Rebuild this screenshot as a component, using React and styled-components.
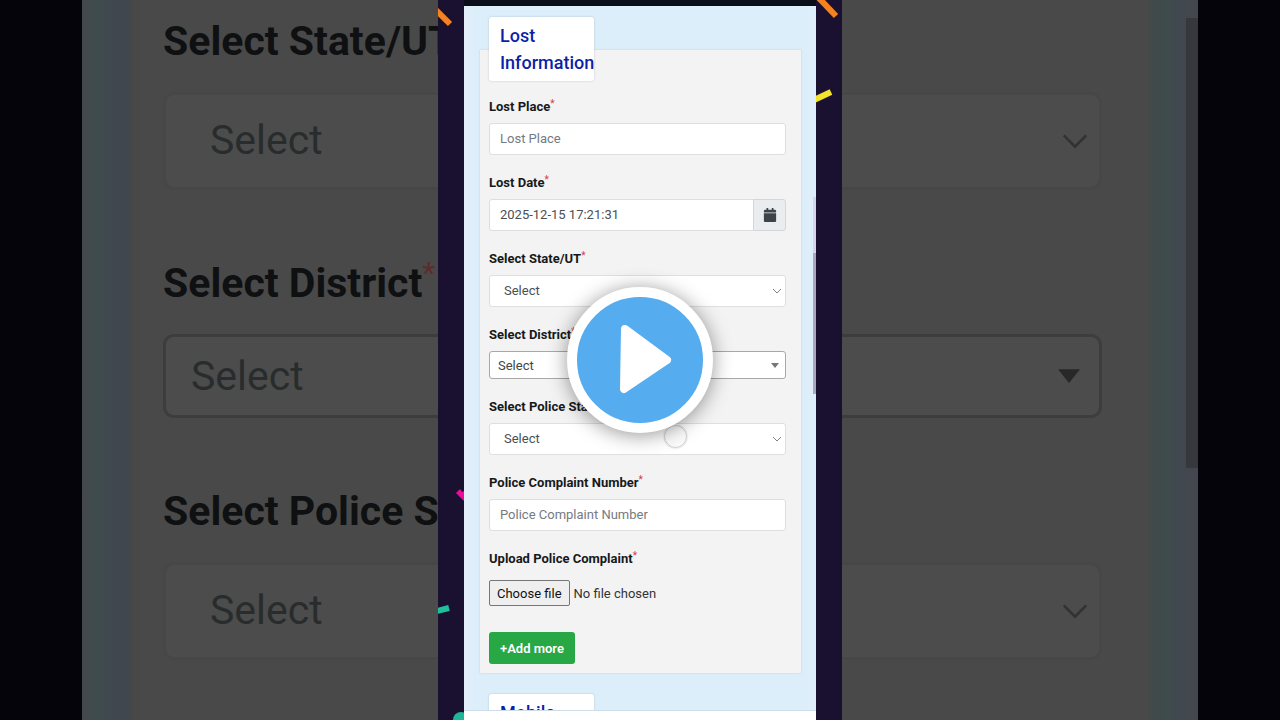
import React, { useRef } from "react";
import styled, { createGlobalStyle } from "styled-components";
import { FaCalendar } from "react-icons/fa";

const GlobalStyle = createGlobalStyle`
  *, *::before, *::after { box-sizing: border-box; }
  body { margin: 0; background: #06040b; font-family: Roboto, "Liberation Sans", sans-serif; }
  button, input, select { font-family: inherit; margin: 0; }
`;

const Page = styled.main`
  display: grid;
  grid-template: 100vh / minmax(0, 1fr);
  overflow: hidden;
  > * { grid-area: 1 / 1; }
`;

/* Enlarged, darkened copy of the form behind the video */
const Backdrop = styled.div`
  position: relative;
  margin: 0 82px;
  padding: 16px 96px 0 81px;
  display: flex;
  flex-direction: column;
  gap: 68px;
  overflow: hidden;
  background: linear-gradient(90deg,
    #45474c 0, #3f4b4d 10px, #3f4b4d 20px, #40484f 30px, #40474f 44px, #484848 52px,
    #494949 60px, #494949 calc(100% - 52px), #3f4a4a calc(100% - 42px),
    #3f4b4c calc(100% - 30px), #40484f calc(100% - 22px), #44464e 100%);
`;

const BackdropThumb = styled.div`
  position: absolute;
  top: 18px;
  right: 0;
  width: 12px;
  height: 450px;
  background: #36383d;
`;

const Stage = styled.section`
  position: relative;
  justify-self: center;
  height: 100%;
  aspect-ratio: 101 / 180;
  padding: 0 26px;
  background: #1a1030;
`;

const Confetti = styled.svg`
  position: absolute;
  inset: 0;
  width: 100%;
  height: 100%;
`;

const Phone = styled.div`
  position: relative;
  height: 100%;
  display: flex;
  flex-direction: column;
`;

const StatusStrip = styled.div`
  flex: 0 0 6px;
  background: #0b0e19;
`;

const Scroller = styled.div`
  flex: 1;
  min-height: 0;
  overflow: hidden;
  padding: 0 15px 0 16px;
  display: flex;
  flex-direction: column;
  background: linear-gradient(90deg, #e4eefb 0, #dceefa 12px, #dceefa calc(100% - 12px), #e0eefc 100%);
`;

const NavBar = styled.div`
  flex: 0 0 10px;
  background: #fff;
  border-top: 1px solid #cfdcea;
`;

const Thumb = styled.div`
  position: absolute;
  top: 197px;
  right: 0;
  width: 3px;
  height: 197px;
  background: linear-gradient(#d5d6ea 0, #d5d6ea 56px, #a9abbd 56px);
`;

const Card = styled.section`
  flex: none;
  margin-top: ${(p) => p.$gap}px;
  padding: 0 15px 9px 9px;
  display: flex;
  flex-direction: column;
  background: #f3f3f3;
  box-shadow: 0 0 2px rgba(120, 120, 110, 0.25);
`;

const CardTitle = styled.h2`
  width: 105px;
  height: 64px;
  margin: -33px 0 16px;
  padding: 5px 0 5px 11px;
  background: #fff;
  border-radius: 3px;
  box-shadow: 0 0 2px rgba(60, 60, 60, 0.25);
  color: #0d1fa8;
  font-size: 18px;
  font-weight: 500;
  line-height: 27px;
`;

const Fields = styled.div`
  display: flex;
  flex-direction: column;
  gap: 18px;
`;

const Field = styled.div`
  display: flex;
  flex-direction: column;
  gap: ${(p) => (p.$large ? 28 : 6)}px;
`;

const Label = styled.label`
  height: ${(p) => (p.$large ? 48 : 20)}px;
  color: ${(p) => (p.$large ? "#0f1011" : "#16191c")};
  font-size: ${(p) => (p.$large ? 41 : 13)}px;
  font-weight: 700;
  line-height: ${(p) => (p.$large ? 48 : 20)}px;
  white-space: nowrap;
`;

const Star = styled.span`
  color: ${(p) => (p.$large ? "#5c2c2c" : "#dc3545")};
  font-size: ${(p) => (p.$large ? 30 : 10)}px;
  font-weight: 400;
  line-height: 1;
  vertical-align: ${(p) => (p.$large ? 14 : 4)}px;
`;

const TextInput = styled.input`
  flex: 1;
  width: 100%;
  min-width: 0;
  min-height: 32px;
  padding: 0 10px 2px;
  border: 1px solid #dcdee1;
  border-radius: ${(p) => (p.$joined ? "3px 0 0 3px" : "3px")};
  background: #fff;
  color: #495057;
  font-size: 13px;
  &::placeholder { color: #757b81; opacity: 1; }
`;

const InputGroup = styled.div`
  display: flex;
  height: 32px;
`;

const IconButton = styled.button`
  width: 33px;
  margin-left: -1px;
  padding: 0;
  display: grid;
  place-items: center;
  border: 1px solid #d3d7db;
  border-radius: 0 3px 3px 0;
  background: #e9edf0;
  color: #3c4449;
  font-size: 14px;
`;

const SelectWrap = styled.div`
  display: grid;
  align-items: center;
  > * { grid-area: 1 / 1; }
  > svg {
    justify-self: end;
    pointer-events: none;
    margin-right: ${(p) => (p.$large ? (p.$boxed ? 22 : 13) : p.$boxed ? 7 : 4)}px;
  }
`;

const Select = styled.select`
  appearance: none;
  width: 100%;
  height: ${(p) => (p.$large ? (p.$boxed ? 84 : 98) : p.$boxed ? 28 : 32)}px;
  padding: 0 ${(p) => (p.$large ? (p.$boxed ? 25 : 44) : p.$boxed ? 8 : 14)}px ${(p) => (p.$boxed ? 0 : 2)}px;
  border-style: solid;
  border-width: ${(p) => (p.$large ? 3 : 1)}px;
  border-color: ${(p) => (p.$large ? (p.$boxed ? "#3d3d3d" : "#474747") : p.$boxed ? "#a8a8a8" : "#dddfe2")};
  border-radius: ${(p) => (p.$large ? 11 : 3)}px;
  background: ${(p) => (p.$large ? "#4c4c4c" : "#fff")};
  color: ${(p) => (p.$large ? "#282c2d" : p.$boxed ? "#444" : "#495057")};
  font-size: ${(p) => (p.$large ? 41 : 13)}px;
  opacity: 1;
`;

const FileRow = styled.div`
  display: flex;
  align-items: center;
  gap: 4px;
  height: 36px;
  color: #333;
  font-size: 13px;
`;

const FileButton = styled.button`
  height: 26px;
  padding: 0 7px;
  border: 1px solid #767676;
  border-radius: 2px;
  background: #efefef;
  color: #111;
  font-size: 13px;
`;

const Actions = styled.div`
  padding-top: 3px;
`;

const AddButton = styled.button`
  height: 32px;
  padding: 0 11px;
  border: 0;
  border-radius: 3px;
  background: #27a844;
  color: #fff;
  font-size: 13px;
  font-weight: 600;
`;

const TouchDot = styled.div`
  position: relative;
  place-self: center;
  width: 23px;
  height: 23px;
  left: 35px;
  top: 76px;
  border: 1px solid #cfcdd0;
  border-radius: 50%;
  background: rgba(250, 250, 250, 0.85);
  box-shadow: 0 0 2px rgba(0, 0, 0, 0.2);
`;

const PlayButton = styled.button`
  position: relative;
  place-self: center;
  width: 146px;
  height: 146px;
  padding: 0;
  border: 10px solid #fff;
  border-radius: 50%;
  background: #55adf0;
  box-shadow: 0 2px 20px rgba(0, 0, 0, 0.42);
  svg { display: block; width: 126px; height: 126px; }
`;

function Chevron({ large }) {
  return (
    <svg width={large ? 28 : 10} height={large ? 18 : 6} viewBox="0 0 10 6" fill="none" aria-hidden="true">
      <path d="M1 1l4 4 4-4" stroke={large ? "#303233" : "#7c8287"} strokeWidth={large ? 0.9 : 1} />
    </svg>
  );
}

function Triangle({ large }) {
  return (
    <svg width={large ? 22 : 8} height={large ? 14 : 5} viewBox="0 0 8 5" aria-hidden="true">
      <path d="M0 0h8L4 5z" fill={large ? "#282828" : "#777"} />
    </svg>
  );
}

function FieldLabel({ id, large, children }) {
  return (
    <Label htmlFor={id} $large={large}>
      {children}
      <Star $large={large}>*</Star>
    </Label>
  );
}

function SelectField({ id, label, boxed, large }) {
  return (
    <Field $large={large}>
      <FieldLabel id={id} large={large}>{label}</FieldLabel>
      <SelectWrap $boxed={boxed} $large={large}>
        <Select id={id} $boxed={boxed} $large={large} tabIndex={large ? -1 : undefined}>
          <option>Select</option>
        </Select>
        {boxed ? <Triangle large={large} /> : <Chevron large={large} />}
      </SelectWrap>
    </Field>
  );
}

function TextField({ id, label }) {
  return (
    <Field>
      <FieldLabel id={id}>{label}</FieldLabel>
      <TextInput id={id} type="text" placeholder={label} />
    </Field>
  );
}

function UploadField() {
  const file = useRef(null);
  return (
    <Field>
      <FieldLabel id="complaint-file">Upload Police Complaint</FieldLabel>
      <FileRow>
        <input id="complaint-file" type="file" hidden ref={file} />
        <FileButton type="button" onClick={() => file.current.click()}>Choose file</FileButton>
        <span>No file chosen</span>
      </FileRow>
    </Field>
  );
}

export default function App() {
  return (
    <>
      <GlobalStyle />
      <Page>
        <Backdrop aria-hidden="true">
          <SelectField large id="bg-state" label="Select State/UT" />
          <SelectField large boxed id="bg-district" label="Select District" />
          <SelectField large id="bg-station" label="Select Police Station" />
          <BackdropThumb />
        </Backdrop>

        <Stage>
          <Confetti viewBox="0 0 404 720" fill="none" aria-hidden="true">
            <path d="M-2 10L12 24" stroke="#f5821f" strokeWidth="6" />
            <path d="M378 -5L398 16" stroke="#f5821f" strokeWidth="6" />
            <path d="M376 100L393 92" stroke="#f3e22b" strokeWidth="6" />
            <path d="M18 493l4-4 2 3 2-1v10z" fill="#ee0b9c" />
            <path d="M-1 611L11 608" stroke="#1fbf9c" strokeWidth="6" />
            <circle cx="23" cy="720" r="8" fill="#1fb596" />
          </Confetti>
          <Phone>
            <StatusStrip />
            <Scroller>
              <Card $gap={44}>
                <CardTitle>Lost Information</CardTitle>
                <Fields>
                  <TextField id="place" label="Lost Place" />
                  <Field>
                    <FieldLabel id="date">Lost Date</FieldLabel>
                    <InputGroup>
                      <TextInput id="date" type="text" defaultValue="2025-12-15 17:21:31" $joined />
                      <IconButton type="button" aria-label="Open calendar"><FaCalendar /></IconButton>
                    </InputGroup>
                  </Field>
                  <SelectField id="state" label="Select State/UT" />
                  <SelectField boxed id="district" label="Select District" />
                  <SelectField id="station" label="Select Police Station" />
                  <TextField id="complaint" label="Police Complaint Number" />
                  <UploadField />
                  <Actions>
                    <AddButton type="button">+Add more</AddButton>
                  </Actions>
                </Fields>
              </Card>
              <Card $gap={54}>
                <CardTitle>Mobile Information</CardTitle>
              </Card>
            </Scroller>
            <NavBar />
            <Thumb />
          </Phone>
        </Stage>

        <TouchDot />
        <PlayButton type="button" aria-label="Play video">
          <svg viewBox="0 0 126 126" aria-hidden="true">
            <path
              d="M48 32L90 63L47 92Z"
              fill="#fff"
              stroke="#fff"
              strokeWidth="8"
              strokeLinejoin="round"
            />
          </svg>
        </PlayButton>
      </Page>
    </>
  );
}
